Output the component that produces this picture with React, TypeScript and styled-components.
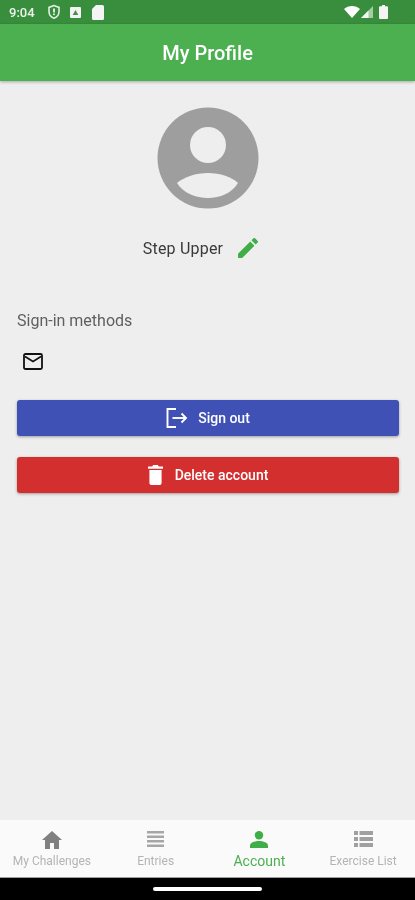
import styled, { createGlobalStyle } from "styled-components";

const Global = createGlobalStyle`
  html, body {
    margin: 0;
    padding: 0;
    background: #000000;
  }
  * {
    box-sizing: border-box;
  }
`;

const Page = styled.div`
  width: 415px;
  height: 900px;
  display: flex;
  flex-direction: column;
  overflow: hidden;
  background: #eeeeee;
  font-family: Roboto, "Liberation Sans", sans-serif;
  filter: blur(0.45px);
`;

const StatusBar = styled.div`
  height: 24px;
  flex: none;
  display: flex;
  align-items: center;
  justify-content: space-between;
  padding: 0 27px 0 9px;
  background: #388e3c;
  color: #ffffff;
`;

const StatusGroup = styled.div`
  display: flex;
  align-items: center;
  gap: 1px;
`;

const Clock = styled.span`
  font-size: 13px;
  font-weight: 500;
  margin-right: 11px;
  opacity: 0.9;
`;

const AppBar = styled.header`
  height: 57px;
  flex: none;
  display: flex;
  align-items: center;
  justify-content: center;
  background: #4caf50;
  color: #ffffff;
  font-size: 20px;
  font-weight: 500;
  box-shadow: 0 1px 3px rgba(0, 0, 0, 0.3);
  position: relative;
`;

const Content = styled.main`
  flex: 1;
  display: flex;
  flex-direction: column;
  padding: 26px 16px 0 17px;
`;

const ProfileBlock = styled.section`
  display: flex;
  flex-direction: column;
  align-items: center;
`;

const NameRow = styled.div`
  margin-top: 27px;
  height: 24px;
  display: flex;
  align-items: center;
  gap: 15px;
  font-size: 16px;
  letter-spacing: 0.2px;
  color: #3a3a3a;
  padding-right: 15px;
`;

const SectionLabel = styled.div`
  margin-top: 49px;
  height: 24px;
  line-height: 24px;
  font-size: 16px;
  color: #5f5f5f;
`;

const MethodRow = styled.div`
  margin-top: 16px;
  height: 24px;
  padding-left: 6px;
  display: flex;
  align-items: center;
`;

const ActionButton = styled.button<{ $color: string; $gap: number; $top: number }>`
  width: 100%;
  height: 36px;
  margin-top: ${(p) => p.$top}px;
  display: flex;
  align-items: center;
  justify-content: center;
  gap: ${(p) => p.$gap}px;
  border: none;
  border-radius: 3px;
  background: ${(p) => p.$color};
  color: #ffffff;
  font-family: inherit;
  font-size: 14px;
  font-weight: 500;
  box-shadow: 0 1px 3px rgba(0, 0, 0, 0.35);
`;

const BottomNav = styled.nav`
  height: 58px;
  flex: none;
  display: grid;
  grid-template-columns: repeat(4, 1fr);
  background: #fafafa;
  border-bottom: 1px solid #9e9e9e;
`;

const NavItem = styled.div<{ $active?: boolean }>`
  display: flex;
  flex-direction: column;
  align-items: center;
  padding-top: 11px;
  color: ${(p) => (p.$active ? "#4caf50" : "#b4b4b4")};
  font-size: ${(p) => (p.$active ? 14 : 12)}px;
  line-height: 16px;
  white-space: nowrap;
`;

const NavIconBox = styled.div`
  height: 22px;
  display: flex;
  align-items: flex-start;
  justify-content: center;
`;

const SystemBar = styled.div`
  height: 22px;
  flex: none;
  display: flex;
  align-items: center;
  justify-content: center;
  background: #000000;
`;

const HomePill = styled.div`
  width: 109px;
  height: 4px;
  margin-top: -1px;
  border-radius: 2px;
  background: #ffffff;
`;

const ShieldIcon = () => (
  <svg width="14" height="16" viewBox="0 0 14 16" style={{ marginRight: 8 }}>
    <path d="M7 1.500 2 3.400v4c0 3.200 2.100 5.700 5 6.800 2.900-1.100 5-3.600 5-6.800v-4z" fill="none" stroke="#fff" strokeWidth="1.600" opacity="0.85" />
    <rect x="6.200" y="4.500" width="1.600" height="4" fill="#fff" />
    <rect x="6.200" y="9.500" width="1.600" height="1.600" fill="#fff" />
  </svg>
);

const PhotoIcon = () => (
  <svg width="11" height="11" viewBox="0 0 11 11" style={{ marginRight: 10 }}>
    <rect x="0" y="0" width="11" height="11" rx="1" fill="#f2f2f2" />
    <path d="M5.500 3 8.300 8H2.700z" fill="#4a8a4e" />
  </svg>
);

const SdIcon = () => (
  <svg width="12" height="15" viewBox="0 0 12 15">
    <path d="M4 0h6.500A1.500 1.500 0 0 1 12 1.500v12a1.500 1.500 0 0 1-1.500 1.500h-9A1.500 1.500 0 0 1 0 13.500V4z" fill="#f4f4f4" />
  </svg>
);

const WifiIcon = () => (
  <svg width="16" height="12" viewBox="0 0 16 12">
    <path d="M8 12 0 3C2.200 1.100 5 0 8 0s5.800 1.100 8 3z" fill="#ffffff" />
  </svg>
);

const SignalIcon = () => (
  <svg width="12" height="12" viewBox="0 0 12 12" style={{ marginRight: 5 }}>
    <path d="M12 0v12H0z" fill="#ffffff" opacity="0.55" />
    <path d="M7.500 4.500V12H0z" fill="#ffffff" opacity="0.85" />
  </svg>
);

const BatteryIcon = () => (
  <svg width="9" height="14" viewBox="0 0 9 14">
    <path d="M3 0h3v1.200h2A1 1 0 0 1 9 2.200V13a1 1 0 0 1-1 1H1a1 1 0 0 1-1-1V2.200a1 1 0 0 1 1-1h2z" fill="#f4f4f4" />
  </svg>
);

const AvatarIcon = () => (
  <svg width="102" height="102" viewBox="0 0 102 102">
    <circle cx="51" cy="51" r="50.500" fill="#9e9e9e" />
    <circle cx="51" cy="38" r="18" fill="#eeeeee" />
    <path d="M20 76C27 70 39 66 51 66s24 4 30 10C75 86 63 91 51 91S26 86 20 76z" fill="#eeeeee" />
  </svg>
);

const PencilIcon = () => (
  <svg width="20" height="20" viewBox="3 3 18 18">
    <path
      fill="#3fae46"
      d="M3 17.250V21h3.750L17.810 9.940l-3.750-3.750L3 17.250zM20.710 7.040a1 1 0 0 0 0-1.410l-2.340-2.340a1 1 0 0 0-1.410 0l-1.830 1.830 3.750 3.750 1.830-1.830z"
    />
  </svg>
);

const MailIcon = () => (
  <svg width="20" height="17" viewBox="0 0 20 17">
    <rect x="1" y="1" width="18" height="15" rx="1.500" fill="none" stroke="#111111" strokeWidth="1.800" />
    <path d="M2 3.500 10 8.500l8-5" fill="none" stroke="#111111" strokeWidth="1.600" />
  </svg>
);

const SignOutIcon = () => (
  <svg width="22" height="20" viewBox="0 0 22 20" fill="none" stroke="#ffffff" strokeWidth="1.900">
    <path d="M10 1H1.500v18H10" />
    <path d="M6.500 10H20" />
    <path d="M15.500 5.500 20 10l-4.500 4.500" />
  </svg>
);

const TrashIcon = () => (
  <svg width="15" height="20" viewBox="0 0 16 20" preserveAspectRatio="none">
    <path d="M5.500 0h5l1 1.500H16v2.300H0V1.500h4.500z" fill="#ffffff" />
    <path d="M1.500 5h13v13a2 2 0 0 1-2 2h-9a2 2 0 0 1-2-2z" fill="#ffffff" />
  </svg>
);

const HomeIcon = () => (
  <svg width="20" height="18" viewBox="0 0 20 18">
    <path d="M8 18v-6h4v6h5V9h3L10 0 0 9h3v9z" fill="#808080" />
  </svg>
);

const EntriesIcon = () => (
  <svg width="17" height="16" viewBox="0 0 17 16">
    <path d="M0 0h17v2.500H0zM0 4.500h17V7H0zM0 9h17v2.500H0zM0 13.500h17V16H0z" fill="#a6a6a6" />
  </svg>
);

const PersonIcon = () => (
  <svg width="18" height="17" viewBox="0 0 18 17">
    <circle cx="9" cy="4.200" r="4.200" fill="#3fae46" />
    <path d="M0 17v-2.500C0 11.500 5 10 9 10s9 1.500 9 4.500V17z" fill="#3fae46" />
  </svg>
);

const ListIcon = () => (
  <svg width="19" height="16" viewBox="0 0 19 16">
    <path d="M0 0h4v4H0zM5.500 0H19v4H5.500zM0 6h4v4H0zM5.500 6H19v4H5.500zM0 12h4v4H0zM5.500 12H19v4H5.500z" fill="#a0a0a0" />
  </svg>
);

const tabs = [
  { label: "My Challenges", icon: <HomeIcon /> },
  { label: "Entries", icon: <EntriesIcon /> },
  { label: "Account", icon: <PersonIcon />, active: true },
  { label: "Exercise List", icon: <ListIcon /> },
];

export default function App() {
  return (
    <Page>
      <Global />
      <StatusBar>
        <StatusGroup>
          <Clock>9:04</Clock>
          <ShieldIcon />
          <PhotoIcon />
          <SdIcon />
        </StatusGroup>
        <StatusGroup>
          <WifiIcon />
          <SignalIcon />
          <BatteryIcon />
        </StatusGroup>
      </StatusBar>

      <AppBar>My Profile</AppBar>

      <Content>
        <ProfileBlock>
          <AvatarIcon />
          <NameRow>
            Step Upper
            <PencilIcon />
          </NameRow>
        </ProfileBlock>

        <SectionLabel>Sign-in methods</SectionLabel>
        <MethodRow>
          <MailIcon />
        </MethodRow>

        <ActionButton $color="#3f51b5" $gap={10} $top={27}>
          <SignOutIcon />
          Sign out
        </ActionButton>
        <ActionButton $color="#d32f2f" $gap={12} $top={21}>
          <TrashIcon />
          Delete account
        </ActionButton>
      </Content>

      <BottomNav>
        {tabs.map((t) => (
          <NavItem key={t.label} $active={t.active}>
            <NavIconBox>{t.icon}</NavIconBox>
            {t.label}
          </NavItem>
        ))}
      </BottomNav>
      <SystemBar>
        <HomePill />
      </SystemBar>
    </Page>
  );
}
